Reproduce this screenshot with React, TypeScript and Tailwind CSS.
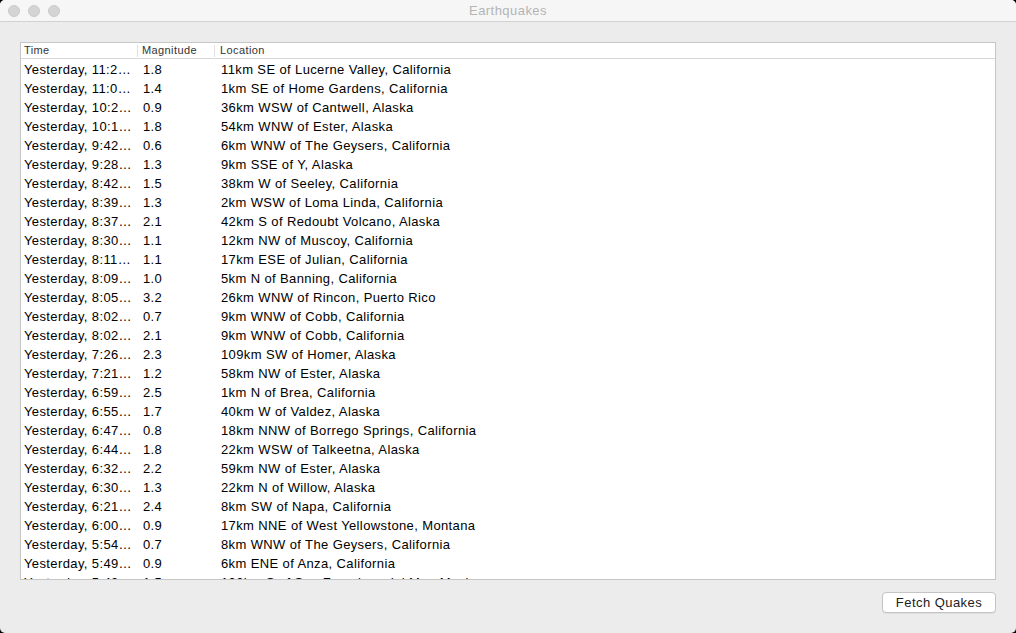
import React from "react";

const rows: [string, string, string][] = [
  ["Yesterday, 11:2…", "1.8", "11km SE of Lucerne Valley, California"],
  ["Yesterday, 11:0…", "1.4", "1km SE of Home Gardens, California"],
  ["Yesterday, 10:2…", "0.9", "36km WSW of Cantwell, Alaska"],
  ["Yesterday, 10:1…", "1.8", "54km WNW of Ester, Alaska"],
  ["Yesterday, 9:42…", "0.6", "6km WNW of The Geysers, California"],
  ["Yesterday, 9:28…", "1.3", "9km SSE of Y, Alaska"],
  ["Yesterday, 8:42…", "1.5", "38km W of Seeley, California"],
  ["Yesterday, 8:39…", "1.3", "2km WSW of Loma Linda, California"],
  ["Yesterday, 8:37…", "2.1", "42km S of Redoubt Volcano, Alaska"],
  ["Yesterday, 8:30…", "1.1", "12km NW of Muscoy, California"],
  ["Yesterday, 8:11…", "1.1", "17km ESE of Julian, California"],
  ["Yesterday, 8:09…", "1.0", "5km N of Banning, California"],
  ["Yesterday, 8:05…", "3.2", "26km WNW of Rincon, Puerto Rico"],
  ["Yesterday, 8:02…", "0.7", "9km WNW of Cobb, California"],
  ["Yesterday, 8:02…", "2.1", "9km WNW of Cobb, California"],
  ["Yesterday, 7:26…", "2.3", "109km SW of Homer, Alaska"],
  ["Yesterday, 7:21…", "1.2", "58km NW of Ester, Alaska"],
  ["Yesterday, 6:59…", "2.5", "1km N of Brea, California"],
  ["Yesterday, 6:55…", "1.7", "40km W of Valdez, Alaska"],
  ["Yesterday, 6:47…", "0.8", "18km NNW of Borrego Springs, California"],
  ["Yesterday, 6:44…", "1.8", "22km WSW of Talkeetna, Alaska"],
  ["Yesterday, 6:32…", "2.2", "59km NW of Ester, Alaska"],
  ["Yesterday, 6:30…", "1.3", "22km N of Willow, Alaska"],
  ["Yesterday, 6:21…", "2.4", "8km SW of Napa, California"],
  ["Yesterday, 6:00…", "0.9", "17km NNE of West Yellowstone, Montana"],
  ["Yesterday, 5:54…", "0.7", "8km WNW of The Geysers, California"],
  ["Yesterday, 5:49…", "0.9", "6km ENE of Anza, California"],
  ["Yesterday, 5:43…", "1.5", "193km S of San Francisco del Mar, Mexico"],
];

export default function App() {
  return (
    <div
      className="w-[1016px] h-[633px] bg-black overflow-hidden"
      style={{ fontFamily: '"Liberation Sans", Arial, sans-serif' }}
    >
      <div className="w-full h-full bg-[#ececec] rounded-[5px] overflow-hidden flex flex-col">
        {/* Title bar */}
        <div className="relative h-[22px] bg-[#f6f6f6] border-b border-[#d1d1d1] flex items-center shrink-0">
          <div className="flex gap-[8px] pl-[8px]">
            <div className="w-[12px] h-[12px] rounded-full bg-[#d4d4d4] border border-[#cacaca]" />
            <div className="w-[12px] h-[12px] rounded-full bg-[#d4d4d4] border border-[#cacaca]" />
            <div className="w-[12px] h-[12px] rounded-full bg-[#d4d4d4] border border-[#cacaca]" />
          </div>
          <div className="absolute inset-0 flex items-center justify-center text-[13px] tracking-[0.45px] text-[#b4b4b4]">
            Earthquakes
          </div>
        </div>

        {/* Content */}
        <div className="flex-1 flex flex-col px-[20px] pt-[20px]">
          <div className="h-[538px] bg-white border border-[#c6c6c6] flex flex-col overflow-hidden">
            <div className="h-[16px] shrink-0 border-b border-[#d8d8d8] flex items-center text-[11px] tracking-[0.4px] text-[#333]">
              <div className="w-[117px] pl-[3px] border-r border-[#e0e0e0] h-[12px] flex items-center">Time</div>
              <div className="w-[77px] pl-[4px] border-r border-[#e0e0e0] h-[12px] flex items-center">Magnitude</div>
              <div className="pl-[5px] h-[12px] flex items-center">Location</div>
            </div>
            <div className="flex-1 overflow-hidden pt-[1px]">
              {rows.map((r, i) => (
                <div key={i} className="h-[19px] flex items-center text-[13px] tracking-[0.38px] text-black whitespace-nowrap">
                  <div className="w-[118px] pl-[3px]">{r[0]}</div>
                  <div className="w-[77px] pl-[4px]">{r[1]}</div>
                  <div className="pl-[5px]">{r[2]}</div>
                </div>
              ))}
            </div>
          </div>
          <div className="flex justify-end mt-[12px]">
            <button className="w-[114px] h-[21px] bg-white border border-[#c4c4c4] rounded-[4px] text-[13px] tracking-[0.45px] text-[#222] flex items-center justify-center shadow-[0_1px_0_rgba(0,0,0,0.06)]">
              Fetch Quakes
            </button>
          </div>
        </div>
      </div>
    </div>
  );
}
